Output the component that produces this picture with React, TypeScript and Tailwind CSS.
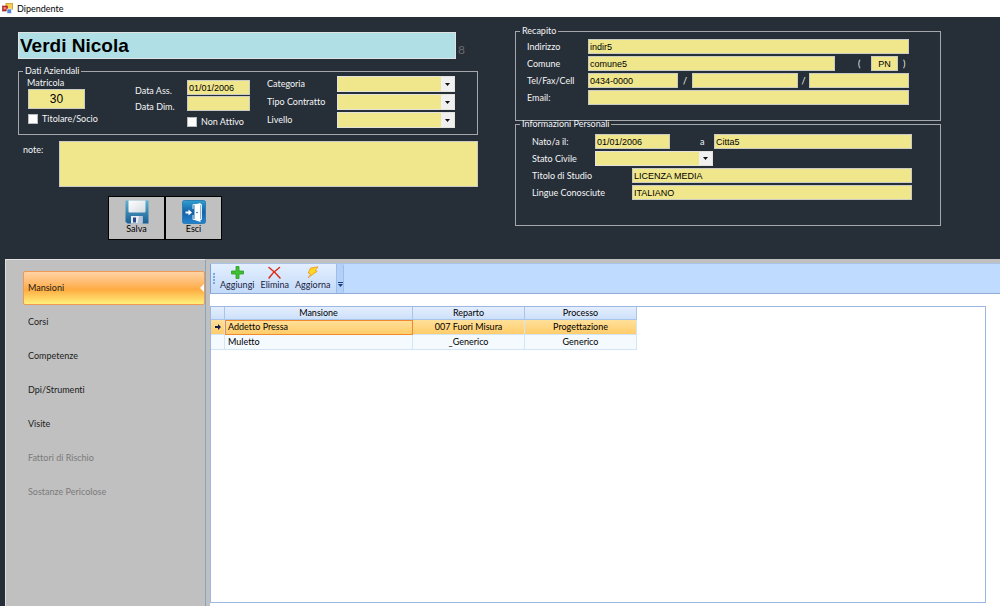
import React from 'react';

interface FieldProps {
  id: string;
  label?: string;
  value?: string;
  className?: string;
}

const TextField: React.FC<FieldProps> = ({ id, label, value = '', className = '' }) => (
  <input
    id={id}
    type="text"
    aria-label={label}
    defaultValue={value}
    className={`h-[15px] min-w-0 border border-[#c9cbc4] bg-[#f0e68c] px-px font-['Liberation_Sans',sans-serif] text-black outline-none ${className}`}
  />
);

const SelectField: React.FC<FieldProps> = ({ id, className = '' }) => (
  <div className={`relative ${className}`}>
    <select
      id={id}
      className="block h-full w-full appearance-none border border-[#e4e4dc] bg-[#f0e68c] px-px text-black outline-none"
    >
      <option value=""></option>
    </select>
    <span className="pointer-events-none absolute inset-y-px right-px flex w-[13px] items-center justify-center bg-[#f0f0f0]">
      <svg width="5" height="3" viewBox="0 0 5 3">
        <path d="M0 0h5L2.5 3z" fill="#111" />
      </svg>
    </span>
  </div>
);

const Group: React.FC<{ title: string; className?: string; children: React.ReactNode }> = ({
  title,
  className = '',
  children,
}) => (
  <fieldset className={`min-w-0 border border-[#a4a8ac] ${className}`}>
    <legend className="ml-1 px-0.5 leading-[10px]">{title}</legend>
    {children}
  </fieldset>
);

const CheckField: React.FC<{ id: string; label: string }> = ({ id, label }) => (
  <div className="flex h-[11px] items-center gap-1">
    <input id={id} type="checkbox" className="size-[10px] appearance-none border border-[#b8bbbf] bg-white checked:bg-[#2a6fb5]" />
    <label htmlFor={id}>{label}</label>
  </div>
);

const FormIcon = () => (
  <svg width="11" height="11" viewBox="0 0 11 11">
    <rect x="4" y="0.5" width="6.5" height="6" fill="#f9cf52" stroke="#b98a1c" strokeWidth="0.7" />
    <rect x="0.5" y="3" width="5" height="5" fill="#c8362b" stroke="#8e1d16" strokeWidth="0.6" />
    <rect x="1.7" y="4.2" width="2" height="2" fill="#f09a90" />
    <rect x="5" y="6" width="4.5" height="4.5" fill="#4f86dd" stroke="#fff" strokeWidth="0.6" />
  </svg>
);

const SaveIcon = () => (
  <svg width="24" height="24" viewBox="0 0 24 24">
    <defs>
      <linearGradient id="disk" x1="0" y1="0" x2="0" y2="1">
        <stop offset="0" stopColor="#5fb0d0" />
        <stop offset="1" stopColor="#175f93" />
      </linearGradient>
      <linearGradient id="paper" x1="0" y1="0" x2="1" y2="1">
        <stop offset="0" stopColor="#ffffff" />
        <stop offset="1" stopColor="#d5dbe2" />
      </linearGradient>
    </defs>
    <path d="M0.5 0.5h23v23h-21l-2-2z" fill="url(#disk)" />
    <path d="M3.5 0.5h17v11q0 1-1 1h-15q-1 0-1-1z" fill="url(#paper)" />
    <path d="M6 16h11.5v7.5H6z" fill="#e9edf2" />
    <path d="M8 17.5h3v5H8z" fill="#2b4a8c" />
    <path d="M14 16h3.5v7.5h-5z" fill="#b9c4d4" />
  </svg>
);

const ExitIcon = () => (
  <svg width="24" height="24" viewBox="0 0 24 24">
    <defs>
      <linearGradient id="exit" x1="0" y1="0" x2="0" y2="1">
        <stop offset="0" stopColor="#2fa0cf" />
        <stop offset="0.5" stopColor="#1560a6" />
        <stop offset="1" stopColor="#2583cf" />
      </linearGradient>
    </defs>
    <rect x="0.5" y="0.5" width="23" height="23" rx="2" fill="url(#exit)" stroke="#2b7fb5" />
    <path d="M11 9V4.500h8.5v15H11V15" fill="none" stroke="#d9ecf8" strokeWidth="1" />
    <path d="M12.5 4.500l6-1.500v19l-6-2z" fill="#fff" />
    <circle cx="15" cy="12.5" r="0.8" fill="#1560a6" />
    <path d="M3.5 11.5h3V9.5l3.5 3-3.5 3v-2h-3z" fill="#fff" />
  </svg>
);

const AddIcon = () => (
  <svg width="13" height="13" viewBox="0 0 13 13">
    <path d="M5 0.5h3V5h4.5v3H8v4.5H5V8H0.5V5H5z" fill="#3fc132" stroke="#2b9a25" strokeWidth="0.8" />
  </svg>
);

const DeleteIcon = () => (
  <svg width="13" height="13" viewBox="0 0 13 13">
    <path d="M1 1.5Q7 6 12 12M11.5 1.5Q5 6 1 12" fill="none" stroke="#dc2a12" strokeWidth="1.5" strokeLinecap="round" />
  </svg>
);

const RefreshIcon = () => (
  <svg width="13" height="13" viewBox="0 0 13 13">
    <path d="M4.5 2L12 0.8 9.2 4.5l2 0.8L2 11.8l2.8-3.800L2.200 7z" fill="#ffd81f" stroke="#f08a1a" strokeWidth="0.7" strokeLinejoin="round" />
  </svg>
);

const tabs = [
  { name: 'Mansioni', active: true },
  { name: 'Corsi' },
  { name: 'Competenze' },
  { name: 'Dpi/Strumenti' },
  { name: 'Visite' },
  { name: 'Fattori di Rischio', disabled: true },
  { name: 'Sostanze Pericolose', disabled: true },
];

const tools = [
  { name: 'Aggiungi', icon: AddIcon },
  { name: 'Elimina', icon: DeleteIcon },
  { name: 'Aggiorna', icon: RefreshIcon },
];

const rows = [
  { mansione: 'Addetto Pressa', reparto: '007 Fuori Misura', processo: 'Progettazione', selected: true },
  { mansione: 'Muletto', reparto: '_Generico', processo: 'Generico' },
];

const CompanyData = () => (
  <Group title="Dati Aziendali" className="mt-[7px]">
    <div className="flex h-[58px] pr-[22px] pl-2">
      <div className="flex w-[108px] shrink-0 flex-col">
        <label htmlFor="matricola" className="mt-0.5 leading-[10px]">Matricola</label>
        <input
          id="matricola"
          type="text"
          defaultValue="30"
          className="mt-px mb-1 ml-px h-5 w-[57px] border border-[#c9cbc4] bg-[#f0e68c] text-center font-['Liberation_Sans',sans-serif] text-xs text-black outline-none"
        />
        <div className="ml-px">
          <CheckField id="titolare" label="Titolare/Socio" />
        </div>
      </div>
      <div className="mt-1 grid w-[115px] shrink-0 grid-cols-[52px_1fr] content-start items-end gap-y-px">
        <label htmlFor="ass" className="leading-[8px]">Data Ass.</label>
        <TextField id="ass" value="01/01/2006" />
        <label htmlFor="dim" className="leading-[8px]">Data Dim.</label>
        <TextField id="dim" />
        <div className="col-start-2 mt-1">
          <CheckField id="nonattivo" label="Non Attivo" />
        </div>
      </div>
      <div className="ml-[17px] grid flex-1 grid-cols-[70px_1fr] content-start items-center gap-y-0.5">
        <label htmlFor="categoria">Categoria</label>
        <SelectField id="categoria" className="h-4" />
        <label htmlFor="contratto">Tipo Contratto</label>
        <SelectField id="contratto" className="h-4" />
        <label htmlFor="livello">Livello</label>
        <SelectField id="livello" className="h-4" />
      </div>
    </div>
  </Group>
);

const Contacts = () => (
  <Group title="Recapito">
    <div className="grid grid-cols-[61px_1fr] items-center gap-y-0.5 pt-[3px] pr-[31px] pb-[15px] pl-[11px]">
      <label htmlFor="indirizzo">Indirizzo</label>
      <TextField id="indirizzo" value="indir5" />
      <label htmlFor="comune">Comune</label>
      <div className="flex items-center">
        <TextField id="comune" value="comune5" className="flex-1" />
        <span className="w-9 pl-[23px]">(</span>
        <TextField id="provincia" label="Provincia" value="PN" className="w-[27px] text-center" />
        <span className="w-[11px] pl-[5px]">)</span>
      </div>
      <label htmlFor="tel">Tel/Fax/Cell</label>
      <div className="grid grid-cols-[90fr_14px_106fr_11px_100fr] items-center">
        <TextField id="tel" value="0434-0000" />
        <span className="text-center">/</span>
        <TextField id="fax" label="Fax" />
        <span className="text-center">/</span>
        <TextField id="cell" label="Cell" />
      </div>
      <label htmlFor="email">Email:</label>
      <TextField id="email" />
    </div>
  </Group>
);

const PersonalInfo = () => (
  <Group title="Informazioni Personali" className="-mt-0.5">
    <div className="flex flex-col gap-0.5 pt-[5px] pr-7 pb-[25px] pl-4">
      <div className="flex items-center">
        <label htmlFor="nato" className="w-[63px]">Nato/a il:</label>
        <TextField id="nato" value="01/01/2006" className="w-[75px]" />
        <label htmlFor="citta" className="w-11 pl-[30px]">a</label>
        <TextField id="citta" value="Citta5" className="flex-1" />
      </div>
      <div className="flex items-center">
        <label htmlFor="stato" className="w-[63px]">Stato Civile</label>
        <SelectField id="stato" className="h-[15px] w-[118px]" />
      </div>
      <div className="flex items-center">
        <label htmlFor="titolo" className="w-[100px]">Titolo di Studio</label>
        <TextField id="titolo" value="LICENZA MEDIA" className="flex-1" />
      </div>
      <div className="flex items-center">
        <label htmlFor="lingue" className="w-[100px]">Lingue Conosciute</label>
        <TextField id="lingue" value="ITALIANO" className="flex-1" />
      </div>
    </div>
  </Group>
);

const SideTabs = () => (
  <nav className="flex w-[201px] shrink-0 flex-col border-t border-r border-l border-t-[#e2e2e2] border-r-[#86a5c4] border-l-[#dedede] pt-[11px] pl-[17px]">
    {tabs.map((tab) => (
      <button
        key={tab.name}
        type="button"
        disabled={tab.disabled}
        className={`relative h-[34px] rounded-xs border pl-1 text-left ${
          tab.active
            ? 'border-[#ee9a55] bg-linear-to-b from-[#ffd3a3] via-[#ffab3f] via-55% to-[#fff07c]'
            : 'border-transparent'
        } ${tab.disabled ? 'text-[#7b7b7b]' : 'text-[#1c1c1c]'}`}
      >
        {tab.name}
        {tab.active && (
          <svg className="absolute top-3 right-0" width="4" height="8" viewBox="0 0 4 8">
            <path d="M4 0v8L0 4z" fill="#fff" />
          </svg>
        )}
      </button>
    ))}
  </nav>
);

const Toolbar = () => (
  <div className="flex h-[31px] border-t border-b border-t-[#a9c3e6] border-b-[#8fabd6] bg-[#bfdbff]">
    <div className="flex rounded-r-xs border-l border-[#7fa3d8] bg-linear-to-b from-[#e3efff] to-[#c3daf9]">
      <div className="flex w-1.5 items-center justify-center">
        <svg width="2" height="11" viewBox="0 0 2 11">
          <path d="M0 0h2v2H0zM0 3h2v2H0zM0 6h2v2H0zM0 9h2v2H0z" fill="#7fa6dd" />
        </svg>
      </div>
      {tools.map(({ name, icon: Icon }) => (
        <button key={name} type="button" className="flex flex-col items-center px-[3px] pt-0.5 leading-[11px] text-[#1b2240]">
          <Icon />
          {name}
        </button>
      ))}
      <button
        type="button"
        aria-label="Altre opzioni"
        className="ml-[3px] flex w-2 items-end justify-center rounded-r-xs border-x border-[#9dbce8] bg-[#b3d0fa] pb-1.5"
      >
        <svg width="5" height="5" viewBox="0 0 5 5">
          <path d="M0 0h5v1H0zM0 2h5L2.5 5z" fill="#1d3f7c" />
        </svg>
      </button>
    </div>
  </div>
);

const JobsTable = () => (
  <div className="mt-3 mr-[14px] mb-[3px] flex-1 border border-[#9bb7e2]">
    <table className="w-[426px] table-fixed border-separate border-spacing-0 text-center text-black">
      <colgroup>
        <col className="w-[14px]" />
        <col className="w-[188px]" />
        <col className="w-[112px]" />
        <col className="w-[112px]" />
      </colgroup>
      <thead>
        <tr className="h-[13px] bg-linear-to-b from-[#e4eefd] to-[#cbdff9] leading-3">
          <th className="border-r border-b border-[#a9c4ea] p-0" />
          {['Mansione', 'Reparto', 'Processo'].map((title) => (
            <th key={title} className="border-r border-b border-[#a9c4ea] p-0 font-normal">{title}</th>
          ))}
        </tr>
      </thead>
      <tbody>
        {rows.map((row) => (
          <tr
            key={row.mansione}
            className={`h-[15px] leading-[14px] ${row.selected ? 'bg-linear-to-b from-[#ffe09a] to-[#ffcb66]' : 'bg-[#f5faff]'}`}
          >
            <td className="border-r border-b border-[#d4e4f7] p-0">
              {row.selected && (
                <svg className="mx-auto" width="6" height="6" viewBox="0 0 6 6">
                  <path d="M0 2h3V0l3 3-3 3V4H0z" fill="#10224a" />
                </svg>
              )}
            </td>
            <td
              className={`border-r border-b p-0 pl-[3px] text-left ${
                row.selected ? 'border-[#f08a2c] outline outline-offset-[-1px] outline-[#f08a2c]' : 'border-[#d4e4f7]'
              }`}
            >
              {row.mansione}
            </td>
            <td className="border-r border-b border-[#d4e4f7] p-0">{row.reparto}</td>
            <td className="border-r border-b border-[#d4e4f7] p-0">{row.processo}</td>
          </tr>
        ))}
      </tbody>
    </table>
  </div>
);

const actionClass =
  'flex h-11 w-[57px] flex-col items-center border border-black bg-[#c0c0c0] pt-[3px] leading-[10px] text-black';

const App: React.FC = () => {
  return (
    <div className="flex min-h-screen flex-col bg-[#262e38] font-['Lato',sans-serif] text-[9px] [font-variant-ligatures:none]">
      <header className="flex h-[17px] items-center gap-1 bg-white pl-0.5 text-black">
        <FormIcon />
        <h1>Dipendente</h1>
      </header>

      <main className="flex flex-1 flex-col">
        <form className="grid grid-cols-[460fr_426fr] gap-x-[37px] pt-[9px] pr-[59px] pb-[19px] pl-[18px] leading-3 text-[#f4f5f6]">
          <div className="pt-1.5">
            <div className="flex items-end">
              <input
                type="text"
                aria-label="Nominativo"
                defaultValue="Verdi Nicola"
                className="h-[27px] min-w-0 flex-1 border border-[#dfe3e4] bg-[#b0e0e6] px-px font-['Liberation_Sans',sans-serif] text-[19px] font-bold text-black outline-none"
              />
              <span className="w-[22px] pb-px pl-0.5 text-xs text-[#6b6b6b]">8</span>
            </div>
            <CompanyData />
            <div className="mt-1.5 flex">
              <label htmlFor="note" className="w-[41px] pt-[3px] pl-[5px]">note:</label>
              <textarea
                id="note"
                className="h-[46px] flex-1 resize-none border border-[#c9cbc4] bg-[#f0e68c] p-0.5 text-black outline-none"
              />
            </div>
            <div className="mt-[9px] ml-[90px] flex">
              <button type="button" className={actionClass}>
                <SaveIcon />
                Salva
              </button>
              <button type="button" className={actionClass}>
                <ExitIcon />
                Esci
              </button>
            </div>
          </div>
          <div>
            <Contacts />
            <PersonalInfo />
          </div>
        </form>

        <section className="ml-[5px] flex flex-1 bg-[#c0c0c0]">
          <SideTabs />
          <div className="mt-1 ml-1 flex min-w-0 flex-1 flex-col bg-white">
            <Toolbar />
            <JobsTable />
          </div>
        </section>
      </main>
    </div>
  );
};

export default App;
